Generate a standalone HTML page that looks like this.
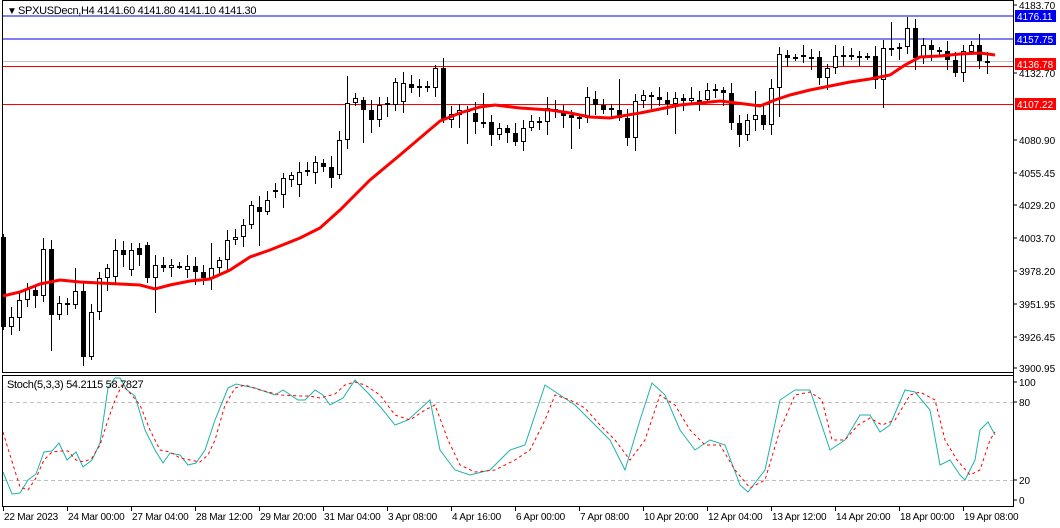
<!DOCTYPE html>
<html><head><meta charset="utf-8"><style>
html,body{margin:0;padding:0;background:#fff;width:1060px;height:528px;overflow:hidden}
svg{display:block;font-family:"Liberation Sans",sans-serif}
</style></head><body>
<svg id="s" width="1060" height="528" xmlns="http://www.w3.org/2000/svg">
<rect width="1060" height="528" fill="#fff"/>
<g id="lv">
<line x1="2" y1="16" x2="1013" y2="16" stroke="#0000e0" stroke-width="1"/>
<line x1="2" y1="39" x2="1013" y2="39" stroke="#0000e0" stroke-width="1"/>
<line x1="2" y1="61.5" x2="1013" y2="61.5" stroke="#c0c0c0" stroke-width="1"/>
<line x1="2" y1="66.5" x2="1013" y2="66.5" stroke="#ff0000" stroke-width="1"/>
<line x1="2" y1="104.5" x2="1013" y2="104.5" stroke="#ff0000" stroke-width="1"/>
<line x1="2" y1="402.5" x2="1013" y2="402.5" stroke="#c0c0c0" stroke-dasharray="4,3"/>
<line x1="2" y1="480.5" x2="1013" y2="480.5" stroke="#c0c0c0" stroke-dasharray="4,3"/>
</g>
<g id="c"></g>
<polyline id="ma" fill="none" stroke="#ff0000" stroke-width="3" points="3,296 20,292 40,284 60,280 80,282 100,283 120,284 140,285 155,289 170,285 190,281 210,279 230,270 250,257 270,250 300,238 320,228 340,210 370,180 400,155 420,138 440,121 460,113 480,107 495,105 520,108 550,110 570,113 590,117 610,118 640,113 660,109 680,105 700,103 720,101 745,104 760,106 775,100 790,95 810,90 830,86 850,82 870,79 890,75 905,65 920,57 940,56 960,54 980,53 995,55"/>
<polyline fill="none" stroke="#20b2aa" stroke-width="1" points="3,472 12,494 20,493 28,480 36,474 44,452 52,451 59,443 67,460 76,452 83,467 92,460 100,443 108,388 115,378 120,378 127,390 135,396 145,430 155,450 163,463 170,453 180,455 188,465 196,463 205,450 215,420 228,388 236,384 245,386 255,388 275,395 283,390 298,400 305,400 315,390 323,395 330,405 343,398 355,380 368,393 383,410 395,425 408,420 430,400 440,450 455,470 470,475 490,470 510,450 525,445 540,400 545,385 560,395 575,405 590,420 610,440 625,470 640,420 652,383 665,395 680,430 695,450 710,440 725,445 740,485 748,492 765,470 780,400 795,390 810,390 820,420 830,450 845,440 860,415 870,415 880,432 890,425 905,390 915,392 930,410 940,465 950,460 960,475 965,480 975,460 980,430 988,422 995,435"/>
<polyline fill="none" stroke="#ff0000" stroke-width="1" stroke-dasharray="3,3" points="3,432 10,455 20,487 28,490 36,478 44,460 52,452 60,451 68,451 76,460 84,462 92,458 100,445 108,420 115,400 122,385 130,393 140,405 150,430 160,450 170,452 180,458 190,460 200,462 208,455 215,440 225,405 235,388 245,385 260,390 280,395 300,396 310,396 320,398 335,394 345,385 355,382 365,385 380,395 395,415 410,420 425,410 435,405 448,440 460,465 475,472 495,470 515,460 530,450 545,420 555,395 570,400 585,408 600,425 615,440 630,460 645,440 660,395 675,405 690,430 705,445 720,445 735,470 750,488 765,480 780,430 795,395 810,392 822,400 832,440 845,440 858,425 870,418 882,425 895,420 910,395 920,392 935,400 945,440 957,460 970,475 980,470 990,440 995,432"/>
<rect x="2.5" y="0.5" width="1011" height="372" fill="none" stroke="#000"/>
<rect x="2.5" y="375.5" width="1011" height="131" fill="none" stroke="#000"/>
<line x1="1013.5" y1="0" x2="1013.5" y2="507" stroke="#000"/>
<text x="7" y="14" font-size="10">▼</text>
<text x="18" y="14" font-size="11" letter-spacing="-0.3">SPXUSDecn,H4  4141.60 4141.80 4141.10 4141.30</text>
<text x="7" y="388" font-size="11" letter-spacing="-0.3">Stoch(5,3,3) 54.2115 58.7827</text>
<g id="ax" font-size="10"></g>
<g font-size="10" fill="#fff">
<rect x="1015" y="10" width="41" height="12" fill="#0000f0"/><text x="1017" y="20">4176.11</text>
<rect x="1015" y="33" width="41" height="12" fill="#0000f0"/><text x="1017" y="43">4157.75</text>
<rect x="1015" y="58" width="41" height="12" fill="#ff0000"/><text x="1017" y="68">4136.78</text>
<rect x="1015" y="98" width="41" height="12" fill="#ff0000"/><text x="1017" y="108">4107.22</text>
</g>
</svg>
<script>
var bars=[[237,327],[327,317],[318,300],[300,289],[290,296],[296,249],[249,315],[315,303],[303,305],[305,291],[291,357],[357,312],[312,278],[278,268],[277,250],[250,255],[270,250],[248,255],[245,278],[278,265],[265,268],[268,265],[266,266],[270,266],[266,272],[272,278],[278,268],[268,260],[260,240],[240,237],[237,225],[225,205],[207,212],[212,200],[190,190],[195,178],[180,175],[185,172],[170,170],[173,162],[163,167],[167,178],[175,140],[140,103],[103,98],[100,110],[110,120],[120,105],[105,103],[105,82],[102,83],[84,88],[87,86],[86,88],[88,68],[68,120],[120,114],[115,110],[110,112],[113,122],[122,122],[122,135],[135,128],[128,133],[133,142],[142,128],[128,121],[121,122],[122,108],[109,111],[112,116],[115,118],[117,118],[118,97],[99,105],[105,110],[108,110],[110,118],[118,138],[138,101],[101,95],[95,97],[97,100],[100,104],[104,98],[98,101],[101,98],[100,102],[100,90],[90,89],[90,93],[93,123],[123,135],[135,120],[120,115],[115,125],[125,88],[88,54],[55,58],[58,57],[55,55],[57,57],[57,78],[78,68],[68,56],[55,55],[55,55],[56,56],[56,56],[56,80],[80,48],[48,48],[47,47],[47,28],[28,58],[58,45],[45,50],[50,52],[51,60],[60,73],[73,51],[52,45],[45,61],[61,61]];
var g=document.getElementById('c'),h='';
for(var i=0;i<bars.length;i++){var x=3+8*i,o=bars[i][0],c=bars[i][1],t=Math.min(o,c),b=Math.max(o,c);
var w1=3+((i*7)%9),w2=3+((i*5)%11);if(i%13==6&&i<120)w2+=25;if(i%17==9)w1+=20;if(i==124){w1=1;w2=1;}
h+='<line x1="'+(x+.5)+'" y1="'+(t-w1)+'" x2="'+(x+.5)+'" y2="'+(b+w2)+'" stroke="#000"/>';
if(b-t<2){h+='<rect x="'+(x-2)+'" y="'+t+'" width="5" height="2" fill="#000"/>';}
else h+='<rect x="'+(x-1.5)+'" y="'+(t+.5)+'" width="4" height="'+(b-t-1)+'" fill="'+(c<o?'#fff':'#000')+'" stroke="#000"/>';}
g.innerHTML=h;
var ax='',pl=[[4183.70,5],[4132.70,73],[4080.90,140],[4055.45,173],[4029.20,205],[4003.70,238],[3978.20,271],[3951.95,304],[3926.45,337],[3900.95,368]];
pl.forEach(function(p){ax+='<line x1="1013" y1="'+p[1]+'" x2="1017" y2="'+p[1]+'" stroke="#000"/><text x="1019" y="'+(p[1]+4)+'">'+p[0].toFixed(2)+'</text>';});
[[100,382],[80,402],[20,480],[0,500]].forEach(function(p){ax+='<line x1="1013" y1="'+p[1]+'" x2="1017" y2="'+p[1]+'" stroke="#000"/><text x="1019" y="'+(p[1]+4)+'">'+p[0]+'</text>';});
var d=['22 Mar 2023','24 Mar 00:00','27 Mar 04:00','28 Mar 12:00','29 Mar 20:00','31 Mar 04:00','3 Apr 08:00','4 Apr 16:00','6 Apr 00:00','7 Apr 08:00','10 Apr 20:00','12 Apr 04:00','13 Apr 12:00','14 Apr 20:00','18 Apr 00:00','19 Apr 08:00'];
d.forEach(function(s,k){var x=3+64*k;ax+='<line x1="'+(x+.5)+'" y1="507" x2="'+(x+.5)+'" y2="511" stroke="#000"/><text x="'+(x+1)+'" y="520" letter-spacing="-0.2">'+s+'</text>';});
document.getElementById('ax').innerHTML=ax;
</script>
</body></html>
